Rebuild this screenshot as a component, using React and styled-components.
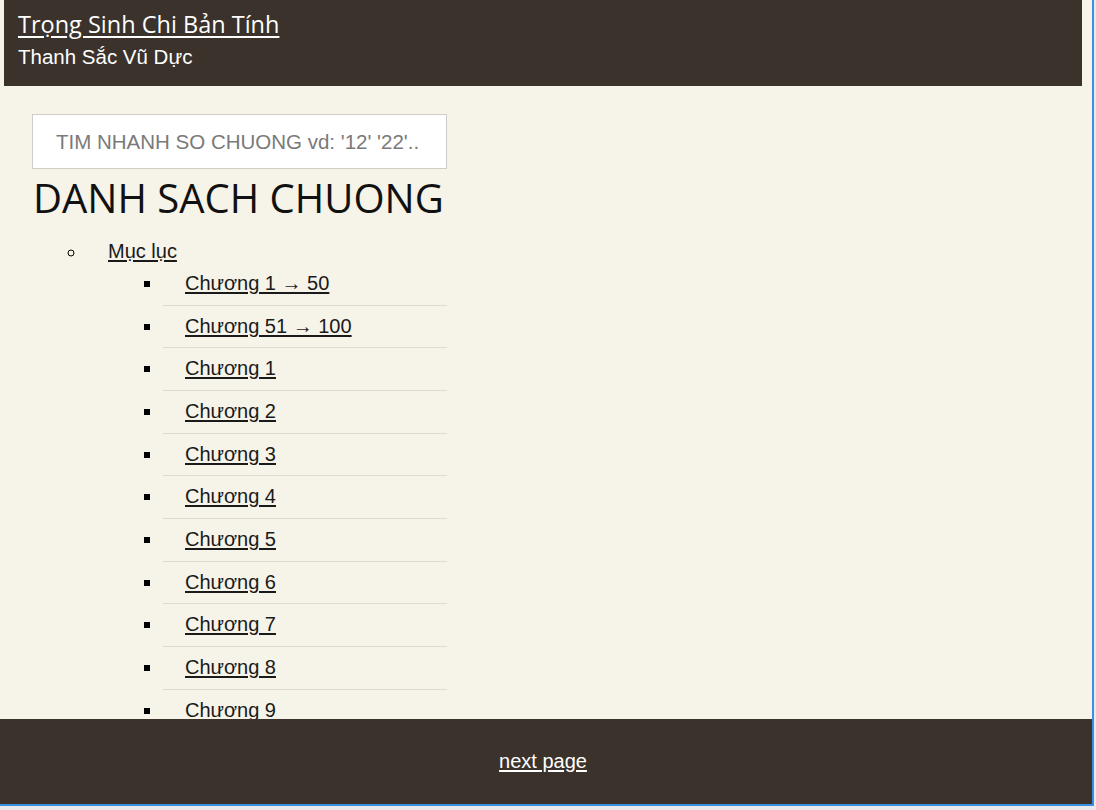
import React from "react";
import styled, { createGlobalStyle } from "styled-components";

const GlobalStyle = createGlobalStyle`
  html, body {
    margin: 0;
    padding: 0;
    background: #e9e9e9;
  }
  body {
    width: 1096px;
    height: 810px;
    overflow: hidden;
    font-family: "Liberation Sans", Arial, sans-serif;
  }
`;

const Screen = styled.div`
  width: 1092px;
  height: 804px;
  display: flex;
  flex-direction: column;
  background: #f6f3e9;
  border-right: 2px solid #3b8fe0;
  border-bottom: 2px solid #3b8fe0;
  overflow: hidden;
`;

const Header = styled.header`
  flex: none;
  height: 86px;
  margin: 0 10px 0 4px;
  padding: 8px 14px 0;
  box-sizing: border-box;
  background: #3b322c;
  color: #fff;
`;

const Title = styled.a`
  display: inline-block;
  color: #fff;
  font-family: "Open Sans", "Noto Sans", sans-serif;
  font-size: 23.5px;
  line-height: 32px;
  text-decoration: underline;
  text-underline-offset: 3px;
`;

const Author = styled.div`
  margin-top: 4px;
  font-size: 20.5px;
  line-height: 26px;
`;

const Main = styled.main`
  flex: 1;
  min-height: 0;
  overflow: hidden;
  padding: 28px 0 0 32px;
`;

const Column = styled.div`
  width: 415px;
`;

const Search = styled.input`
  display: block;
  width: 100%;
  height: 55px;
  box-sizing: border-box;
  border: 1px solid #cfcdc8;
  background: #fff;
  padding: 0 0 0 23px;
  font-family: "Liberation Sans", Arial, sans-serif;
  font-size: 20.5px;
  outline: none;
  &::placeholder {
    color: #7a7a7a;
  }
`;

const Heading = styled.h1`
  margin: 1px 0 0 1px;
  font-family: "Open Sans", "Noto Sans", sans-serif;
  font-weight: 400;
  font-size: 40px;
  line-height: 56px;
  color: #111;
`;

const Outer = styled.ul`
  list-style-type: circle;
  margin: 13px 0 0;
  padding-left: 54px;
  font-size: 20px;
`;

const OuterItem = styled.li`
  padding-left: 22px;
  line-height: 24px;
  &::marker {
    font-size: 19px;
  }
`;

const ItemLink = styled.a`
  color: #1a1a1a;
  text-decoration: underline;
  text-underline-offset: 2px;
`;

const Inner = styled.ul`
  list-style-type: square;
  margin: 0;
  padding: 0 0 0 55px;
`;

const InnerItem = styled.li`
  padding: 8px 0 9px 22px;
  line-height: 24.67px;
  border-bottom: 1px solid #dfdcd4;
  &::marker {
    font-size: 21px;
  }
`;

const Footer = styled.footer`
  flex: none;
  height: 85px;
  display: flex;
  align-items: center;
  justify-content: center;
  background: #3b322c;
  padding-right: 6px;
`;

const NextLink = styled.a`
  color: #fff;
  font-size: 20px;
  text-decoration: underline;
  text-underline-offset: 2px;
`;

const chapters = [
  "Chương 1 → 50",
  "Chương 51 → 100",
  "Chương 1",
  "Chương 2",
  "Chương 3",
  "Chương 4",
  "Chương 5",
  "Chương 6",
  "Chương 7",
  "Chương 8",
  "Chương 9",
  "Chương 10",
];

export default function App() {
  return (
    <>
      <GlobalStyle />
      <Screen>
        <Header>
          <Title href="#">Trọng Sinh Chi Bản Tính</Title>
          <Author>Thanh Sắc Vũ Dực</Author>
        </Header>
        <Main>
          <Column>
            <Search placeholder="TIM NHANH SO CHUONG vd: '12' '22'.." />
            <Heading>DANH SACH CHUONG</Heading>
            <Outer>
              <OuterItem>
                <ItemLink href="#">Mục lục</ItemLink>
                <Inner>
                  {chapters.map((c) => (
                    <InnerItem key={c}>
                      <ItemLink href="#">{c}</ItemLink>
                    </InnerItem>
                  ))}
                </Inner>
              </OuterItem>
            </Outer>
          </Column>
        </Main>
        <Footer>
          <NextLink href="#">next page</NextLink>
        </Footer>
      </Screen>
    </>
  );
}
